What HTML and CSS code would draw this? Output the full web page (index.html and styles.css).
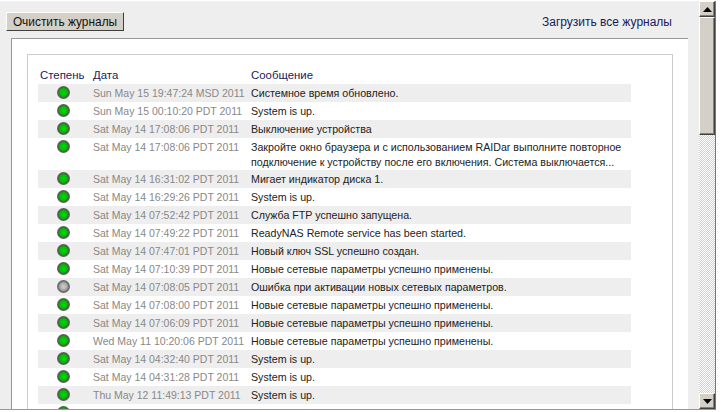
FILE: index.html
```html
<!DOCTYPE html>
<html lang="ru">
<head>
<meta charset="utf-8">
<title>Журналы</title>
<link rel="stylesheet" href="styles.css">
</head>
<body>
<div class="frame">
  <main class="content">
    <div class="toolbar">
      <button class="clear-btn" type="button">Очистить журналы</button>
      <a class="download" href="#">Загрузить все журналы</a>
    </div>
    <div class="panel">
      <div class="box">
        <table class="log">
          <thead>
            <tr><th class="c-sev">Степень</th><th class="c-date">Дата</th><th>Сообщение</th></tr>
          </thead>
          <tbody>
            <tr><td class="c-sev"><span class="dot"></span></td><td class="c-date">Sun May 15 19:47:24 MSD 2011</td><td>Системное время обновлено.</td></tr>
            <tr><td class="c-sev"><span class="dot"></span></td><td class="c-date">Sun May 15 00:10:20 PDT 2011</td><td>System is up.</td></tr>
            <tr><td class="c-sev"><span class="dot"></span></td><td class="c-date">Sat May 14 17:08:06 PDT 2011</td><td>Выключение устройства</td></tr>
            <tr><td class="c-sev"><span class="dot"></span></td><td class="c-date">Sat May 14 17:08:06 PDT 2011</td><td>Закройте окно браузера и с использованием RAIDar выполните повторное<br>подключение к устройству после его включения. Система выключается...</td></tr>
            <tr><td class="c-sev"><span class="dot"></span></td><td class="c-date">Sat May 14 16:31:02 PDT 2011</td><td>Мигает индикатор диска 1.</td></tr>
            <tr><td class="c-sev"><span class="dot"></span></td><td class="c-date">Sat May 14 16:29:26 PDT 2011</td><td>System is up.</td></tr>
            <tr><td class="c-sev"><span class="dot"></span></td><td class="c-date">Sat May 14 07:52:42 PDT 2011</td><td>Служба FTP успешно запущена.</td></tr>
            <tr><td class="c-sev"><span class="dot"></span></td><td class="c-date">Sat May 14 07:49:22 PDT 2011</td><td>ReadyNAS Remote service has been started.</td></tr>
            <tr><td class="c-sev"><span class="dot"></span></td><td class="c-date">Sat May 14 07:47:01 PDT 2011</td><td>Новый ключ SSL успешно создан.</td></tr>
            <tr><td class="c-sev"><span class="dot"></span></td><td class="c-date">Sat May 14 07:10:39 PDT 2011</td><td>Новые сетевые параметры успешно применены.</td></tr>
            <tr><td class="c-sev"><span class="dot dot-gray"></span></td><td class="c-date">Sat May 14 07:08:05 PDT 2011</td><td>Ошибка при активации новых сетевых параметров.</td></tr>
            <tr><td class="c-sev"><span class="dot"></span></td><td class="c-date">Sat May 14 07:08:00 PDT 2011</td><td>Новые сетевые параметры успешно применены.</td></tr>
            <tr><td class="c-sev"><span class="dot"></span></td><td class="c-date">Sat May 14 07:06:09 PDT 2011</td><td>Новые сетевые параметры успешно применены.</td></tr>
            <tr><td class="c-sev"><span class="dot"></span></td><td class="c-date">Wed May 11 10:20:06 PDT 2011</td><td>Новые сетевые параметры успешно применены.</td></tr>
            <tr><td class="c-sev"><span class="dot"></span></td><td class="c-date">Sat May 14 04:32:40 PDT 2011</td><td>System is up.</td></tr>
            <tr><td class="c-sev"><span class="dot"></span></td><td class="c-date">Sat May 14 04:31:28 PDT 2011</td><td>System is up.</td></tr>
            <tr><td class="c-sev"><span class="dot"></span></td><td class="c-date">Thu May 12 11:49:13 PDT 2011</td><td>System is up.</td></tr>
            <tr><td class="c-sev"><span class="dot"></span></td><td class="c-date"></td><td></td></tr>
          </tbody>
        </table>
      </div>
    </div>
  </main>
  <div class="scrollbar">
    <div class="sb-btn"><svg viewBox="0 0 9 5" width="9" height="5"><path d="M4.500 0 9 5H0z" fill="#000"/></svg></div>
    <div class="sb-thumb"></div>
    <div class="sb-track"></div>
    <div class="sb-btn"><svg viewBox="0 0 9 5" width="9" height="5"><path d="M0 0h9L4.500 5z" fill="#000"/></svg></div>
  </div>
</div>
</body>
</html>
```

FILE: styles.css
```css
html, body { margin: 0; padding: 0; height: 100%; overflow: hidden; background: #fff; }
body { font-family: "Liberation Sans", Arial, sans-serif; font-size: 10.66px; color: #222; }

.frame {
  display: flex;
  width: 716px;
  height: 409px;
  margin-top: 1px;
  box-sizing: border-box;
  border-bottom: 1px solid #999;
  border-right: 1px solid #777;
  overflow: hidden;
  background: #eee;
}
.content { width: 699px; flex: none; overflow: hidden; }

.toolbar {
  display: flex;
  justify-content: space-between;
  align-items: center;
  height: 37px;
  padding: 4px 27px 0 6px;
  box-sizing: border-box;
}
.clear-btn {
  font: 11.9px "Liberation Sans", Arial, sans-serif;
  color: #111;
  background: #d4d0c8;
  height: 19px;
  width: 118px;
  padding: 0;
  border: 1px solid;
  border-color: #fff #404040 #404040 #fff;
}
.download { color: #1a1a5a; text-decoration: none; font-size: 12px; }

.panel {
  margin-left: 11px;
  width: 677px;
  height: 400px;
  box-sizing: border-box;
  background: #fff;
  border-top: 1px solid #999;
  border-left: 1px solid #999;
  padding: 15px 15px 0;
}
.box {
  border: 1px solid #ccc;
  border-bottom: 0;
  height: 400px;
  box-sizing: border-box;
  padding: 13px 0 0 10px;
}

.log { border-collapse: collapse; width: 593px; table-layout: fixed; font-size: 10.66px; }
.log th { font-weight: normal; color: #1a1a5a; font-size: 11.4px; text-align: left; height: 16px; padding: 0 0 2px; box-sizing: border-box; }
.log td { padding: 2px 0 0; height: 18px; box-sizing: border-box; line-height: 15px; vertical-align: top; color: #222; }
.log .c-sev { width: 55px; }
.log th.c-sev { padding-left: 2px; }
.log .c-date { width: 158px; }
.log td.c-date { color: #888; font-size: 10.5px; }
.log tbody tr:nth-child(odd) { background: #eee; }

.dot {
  display: block;
  width: 13px;
  height: 13px;
  margin-left: 19px;
  border-radius: 50%;
  background: radial-gradient(closest-side, #00d400 0, #00c000 60%, #2f7a2f 70%, #555e55 82%, #5f665f 100%);
}
.dot-gray { background: radial-gradient(closest-side, #cfcfcf 0, #a8a8a8 60%, #777 72%, #666 100%); }

.scrollbar { width: 16px; display: flex; flex-direction: column; flex: none; }
.sb-btn, .sb-thumb {
  flex: none;
  background: #d4d0c8;
  border: 1px solid;
  border-color: #fff #404040 #404040 #fff;
  box-shadow: inset -1px -1px 0 #808080;
  box-sizing: border-box;
}
.sb-btn {
  height: 16px;
  display: flex;
  align-items: center;
  justify-content: center;
}
.sb-thumb { height: 118px; }
.sb-track {
  flex: 1;
  background-color: #fff;
  background-image: conic-gradient(#d4d0c8 25%, #fff 0 50%, #d4d0c8 0 75%, #fff 0);
  background-size: 2px 2px;
}
```
